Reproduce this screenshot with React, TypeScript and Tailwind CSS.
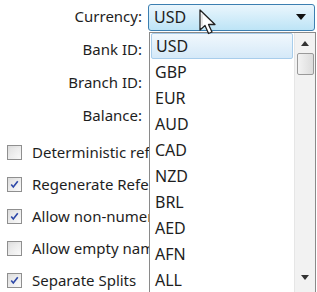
const labels = ["Currency:", "Bank ID:", "Branch ID:", "Balance:"];

const checks = [
  { text: "Deterministic reference numbers", on: false },
  { text: "Regenerate Reference Numbers", on: true },
  { text: "Allow non-numeric", on: true },
  { text: "Allow empty names", on: false },
  { text: "Separate Splits", on: true },
];

const currencies = ["USD", "GBP", "EUR", "AUD", "CAD", "NZD", "BRL", "AED", "AFN", "ALL"];

function CheckBox({ on }: { on: boolean }) {
  return (
    <div className="w-[15px] h-[15px] border border-[#8f8f8f] bg-gradient-to-br from-[#dcdcdc] to-[#fafafa] p-[2px] shrink-0">
      <div className="w-full h-full bg-gradient-to-br from-[#e4e4e4] to-[#f7f7f7] flex items-center justify-center">
        {on && (
          <svg width="11" height="11" viewBox="0 0 11 11">
            <path d="M1.5 5.5 L4 8.5 L9.5 1.5" fill="none" stroke="#2f49a8" strokeWidth="2" />
          </svg>
        )}
      </div>
    </div>
  );
}

function Pointer() {
  return (
    <svg width="22" height="30" viewBox="0 0 22 30" className="absolute left-[199px] top-[9px]">
      <path
        d="M1 1 L1 21 L6 16.5 L9.5 24.5 L13 23 L9.5 15.5 L16 15.5 Z"
        fill="white"
        stroke="#222"
        strokeWidth="1.3"
        strokeLinejoin="round"
      />
      <path d="M3 5 L3 17" stroke="#cfcfcf" strokeWidth="1" />
    </svg>
  );
}

export default function App() {
  return (
    <div className="relative w-[317px] h-[292px] overflow-hidden bg-white text-[#1e1e1e] font-['Noto_Sans','Open_Sans',sans-serif] text-[15px]">
      {/* form */}
      <div className="flex flex-col">
        {labels.map((l, i) => (
          <div key={l} className="h-[33px] flex items-center">
            <div className="w-[143px] text-right pr-[1px]">{l}</div>
            {i === 0 && (
              <div className="ml-[5px] w-[167px] h-[27px] mt-[1px] rounded-[3px] border border-[#3c7fb1] bg-gradient-to-b from-[#eaf6fd] to-[#bde4f6] flex items-center pl-[5px] pr-[8px]">
                <span className="flex-1 text-[16px]">USD</span>
                <svg width="10" height="6" viewBox="0 0 10 6">
                  <path d="M0 0 L10 0 L5 6 Z" fill="#111" />
                </svg>
              </div>
            )}
          </div>
        ))}
        <div className="h-[4px]" />
        {checks.map((c) => (
          <div key={c.text} className="w-[149px] overflow-hidden h-[32px] flex items-center gap-[10px] pl-[7px] whitespace-nowrap">
            <CheckBox on={c.on} />
            <span>{c.text}</span>
          </div>
        ))}
      </div>

      {/* dropdown list */}
      <div className="absolute left-[149px] top-[32px] w-[167px] h-[270px] border border-[#8a8a8a] bg-white flex">
        <div className="flex-1 flex flex-col px-[1px]">
          {currencies.map((c, i) => (
            <div
              key={c}
              className={
                "h-[26px] flex items-center pl-[4px] text-[16px] " +
                (i === 0 ? "rounded-[2px] border border-[#a8cdeb] bg-gradient-to-b from-[#f1f8fd] to-[#d5e9f8]" : "")
              }
            >
              {c}
            </div>
          ))}
        </div>
        <div className="w-[21px] bg-[#f2f2f2] border-l border-[#e6e6e6] flex flex-col items-center">
          <div className="h-[20px] flex items-center justify-center">
            <svg width="8" height="5" viewBox="0 0 8 5">
              <path d="M0 5 L8 5 L4 0 Z" fill="#333" />
            </svg>
          </div>
          <div className="w-[17px] h-[22px] rounded-[2px] border border-[#9a9a9a] bg-gradient-to-r from-[#f3f3f3] to-[#dcdcdc]" />
          <div className="flex-1" />
          <div className="h-[30px] flex items-start justify-center pt-[4px]">
            <svg width="8" height="5" viewBox="0 0 8 5">
              <path d="M0 0 L8 0 L4 5 Z" fill="#333" />
            </svg>
          </div>
        </div>
      </div>

      <Pointer />
    </div>
  );
}
